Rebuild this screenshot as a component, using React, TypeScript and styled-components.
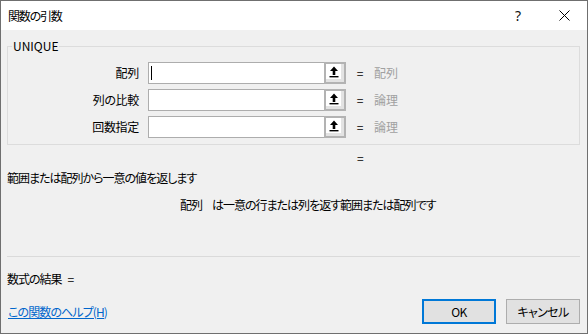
import React from "react";
import styled, { createGlobalStyle } from "styled-components";

const Global = createGlobalStyle`
  html, body { margin: 0; padding: 0; background: #fff; }
  body {
    font-family: "Noto Sans CJK JP", "Noto Sans", sans-serif;
    font-size: 12px;
    color: #000;
    font-feature-settings: "palt";
  }
  * { box-sizing: border-box; }
`;

const Window = styled.div`
  width: 588px;
  height: 334px;
  border: 1px solid #6f6f6f;
  display: flex;
  flex-direction: column;
  background: #f0f0f0;
`;

const TitleBar = styled.div`
  height: 29px;
  background: #fff;
  display: flex;
  align-items: center;
  padding-left: 7px;
`;

const TitleText = styled.div`
  flex: 1;
  line-height: 16px;
  font-size: 12px;
  letter-spacing: -1.2px;
`;

const TitleButton = styled.div`
  width: 46px;
  height: 29px;
  display: flex;
  align-items: center;
  justify-content: center;
  font-family: "Noto Sans", sans-serif;
  font-size: 14px;
  color: #111;
`;

const Body = styled.div`
  flex: 1;
  display: flex;
  flex-direction: column;
  padding: 0 7px 9px 6px;
`;

const Group = styled.fieldset`
  margin: 8px 0 0 0;
  padding: 8px 0 6px 0;
  border: 1px solid #dcdcdc;
  display: flex;
  flex-direction: column;
  gap: 5px;
  min-width: 0;
`;

const Legend = styled.legend`
  margin-left: 4px;
  padding: 0 1px;
  line-height: 16px;
  font-size: 12px;
`;

const Row = styled.div`
  display: flex;
  align-items: center;
  height: 22px;
`;

const Label = styled.div`
  width: 132px;
  text-align: right;
  padding-right: 1px;
  line-height: 16px;
  margin-right: 8px;
  letter-spacing: -0.3px;
`;

const Field = styled.div`
  width: 198px;
  height: 22px;
  display: flex;
`;

const TextBox = styled.div`
  flex: 1;
  height: 22px;
  background: #fff;
  border: 1px solid #adadad;
  border-right: none;
  display: flex;
  align-items: center;
  padding-left: 2px;
`;

const Caret = styled.div`
  width: 1px;
  height: 14px;
  background: #000;
`;

const RefButton = styled.div`
  width: 22px;
  height: 22px;
  border: 2px solid #b3b3b3;
  background: #e3e3e3;
`;

const RefFace = styled.div`
  width: 15px;
  height: 15px;
  background: #fff;
  display: flex;
  align-items: center;
  justify-content: center;
`;

const Eq = styled.div`
  margin-left: 10px;
  width: 8px;
  line-height: 16px;
  text-align: center;
`;

const Value = styled.div`
  margin-left: 10px;
  color: #a0a0a0;
  line-height: 16px;
`;

const Line = styled.div<{ $top: number; $left?: number }>`
  margin-top: ${(p) => p.$top}px;
  padding-left: ${(p) => p.$left ?? 0}px;
  line-height: 16px;
  white-space: pre;
  letter-spacing: -1px;
`;

const ArgName = styled.span`
  margin-right: 10px;
`;

const ResultEq = styled.span`
  margin-left: 6px;
`;

const Separator = styled.div`
  margin-top: auto;
  height: 1px;
  background: #dadada;
`;

const Footer = styled.div`
  margin-top: 12px;
  display: flex;
  align-items: center;
  height: 25px;
`;

const HelpLink = styled.a`
  color: #0066cc;
  text-decoration: underline;
  line-height: 16px;
  cursor: pointer;
  flex: 1;
  padding-left: 1px;
  letter-spacing: -0.9px;
`;

const Button = styled.button<{ $primary?: boolean }>`
  width: 74px;
  height: 25px;
  margin-left: ${(p) => (p.$primary ? 0 : 10)}px;
  background: #e1e1e1;
  border: ${(p) => (p.$primary ? "2px solid #0078d7" : "1px solid #adadad")};
  font-family: "Noto Sans CJK JP", "Noto Sans", sans-serif;
  font-feature-settings: "palt";
  font-size: 12px;
  color: #000;
  padding: 0;
  line-height: 16px;
  letter-spacing: -0.6px;
`;

const UpArrow = () => (
  <svg width="10" height="12" viewBox="0 0 10 12">
    <path d="M5 0.5 L9 5 L6.3 5 L6.3 9 L3.7 9 L3.7 5 L1 5 Z" fill="#000" />
    <rect x="0.5" y="10" width="9" height="1.4" fill="#000" />
  </svg>
);

const CloseIcon = () => (
  <svg width="11" height="11" viewBox="0 0 11 11">
    <path d="M0.5 0.5 L10.5 10.5 M10.5 0.5 L0.5 10.5" stroke="#000" strokeWidth="1" />
  </svg>
);

const args = [
  { label: "配列", value: "配列", caret: true },
  { label: "列の比較", value: "論理", caret: false },
  { label: "回数指定", value: "論理", caret: false },
];

export default function App() {
  return (
    <>
      <Global />
      <Window>
        <TitleBar>
          <TitleText>関数の引数</TitleText>
          <TitleButton>?</TitleButton>
          <TitleButton>
            <CloseIcon />
          </TitleButton>
        </TitleBar>
        <Body>
          <Group>
            <Legend>UNIQUE</Legend>
            {args.map((a) => (
              <Row key={a.label}>
                <Label>{a.label}</Label>
                <Field>
                  <TextBox>{a.caret && <Caret />}</TextBox>
                  <RefButton>
                    <RefFace>
                      <UpArrow />
                    </RefFace>
                  </RefButton>
                </Field>
                <Eq>=</Eq>
                <Value>{a.value}</Value>
              </Row>
            ))}
          </Group>
          <Line $top={5} $left={350}>=</Line>
          <Line $top={4}>範囲または配列から一意の値を返します</Line>
          <Line $top={11} $left={173}>
            <ArgName>配列</ArgName>は一意の行または列を返す範囲または配列です
          </Line>
          <Separator />
          <Line $top={14}>
            数式の結果<ResultEq>=</ResultEq>
          </Line>
          <Footer>
            <HelpLink>この関数のヘルプ(H)</HelpLink>
            <Button $primary>OK</Button>
            <Button>キャンセル</Button>
          </Footer>
        </Body>
      </Window>
    </>
  );
}
